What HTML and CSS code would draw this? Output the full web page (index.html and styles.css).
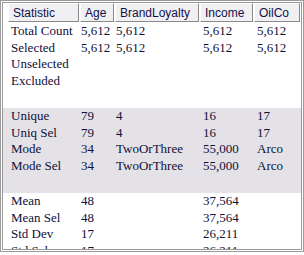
FILE: index.html
```html
<!DOCTYPE html>
<html>
<head>
<meta charset="utf-8">
<link rel="stylesheet" href="styles.css">
</head>
<body>
<div class="frame">
  <div class="head">
    <div class="th">Statistic</div>
    <div class="th">Age</div>
    <div class="th">BrandLoyalty</div>
    <div class="th">Income</div>
    <div class="th">OilCo</div>
  </div>
  <div class="group">
    <div class="row"><span class="c1">Total Count</span><span class="c2">5,612</span><span class="c3">5,612</span><span class="c4">5,612</span><span class="c5">5,612</span></div>
    <div class="row"><span class="c1">Selected</span><span class="c2">5,612</span><span class="c3">5,612</span><span class="c4">5,612</span><span class="c5">5,612</span></div>
    <div class="row"><span class="c1">Unselected</span><span class="c2"></span><span class="c3"></span><span class="c4"></span><span class="c5"></span></div>
    <div class="row"><span class="c1">Excluded</span><span class="c2"></span><span class="c3"></span><span class="c4"></span><span class="c5"></span></div>
  </div>
  <div class="group shade">
    <div class="row"><span class="c1">Unique</span><span class="c2">79</span><span class="c3">4</span><span class="c4">16</span><span class="c5">17</span></div>
    <div class="row"><span class="c1">Uniq Sel</span><span class="c2">79</span><span class="c3">4</span><span class="c4">16</span><span class="c5">17</span></div>
    <div class="row"><span class="c1">Mode</span><span class="c2">34</span><span class="c3">TwoOrThree</span><span class="c4">55,000</span><span class="c5">Arco</span></div>
    <div class="row"><span class="c1">Mode Sel</span><span class="c2">34</span><span class="c3">TwoOrThree</span><span class="c4">55,000</span><span class="c5">Arco</span></div>
  </div>
  <div class="group">
    <div class="row"><span class="c1">Mean</span><span class="c2">48</span><span class="c3"></span><span class="c4">37,564</span><span class="c5"></span></div>
    <div class="row"><span class="c1">Mean Sel</span><span class="c2">48</span><span class="c3"></span><span class="c4">37,564</span><span class="c5"></span></div>
    <div class="row"><span class="c1">Std Dev</span><span class="c2">17</span><span class="c3"></span><span class="c4">26,211</span><span class="c5"></span></div>
    <div class="row"><span class="c1">Std Sel</span><span class="c2">17</span><span class="c3"></span><span class="c4">26,211</span><span class="c5"></span></div>
  </div>
</div>
</body>
</html>
```

FILE: styles.css
```css
html, body {
  margin: 0;
  padding: 0;
  background: #ffffff;
}

.frame {
  box-sizing: border-box;
  width: 304px;
  height: 252px;
  border: 3px double #9a9a9a;
  overflow: hidden;
  background: #ffffff;
  color: #10103a;
}

.head {
  display: grid;
  grid-template-columns: 5px 72px 35px 85px 54px 47px;
  height: 20px;
}

.head::before {
  content: "";
}

.th {
  box-sizing: border-box;
  margin-right: 1px;
  height: 19px;
  padding: 2px 0 0 4px;
  background: #f0eff2;
  border: 1px solid;
  border-color: #ffffff #8a8a8a #8a8a8a #ffffff;
  font-family: "Liberation Sans", Arial, sans-serif;
  font-size: 12px;
  line-height: 14px;
  color: #12124a;
  white-space: nowrap;
  overflow: hidden;
}

.group {
  height: 85px;
}

.shade {
  background: #e4e2e6;
}

.row {
  display: grid;
  grid-template-columns: 5px 72px 35px 85px 54px 47px;
  height: 16.5px;
  font-family: "Liberation Serif", "Times New Roman", serif;
  font-size: 13px;
  line-height: 16.5px;
  white-space: nowrap;
}

.row::before {
  content: "";
}

.c1 { padding-left: 3px; }
.c2 { padding-left: 1px; }
.c3 { padding-left: 1px; }
.c4 { padding-left: 3px; }
.c5 { padding-left: 3px; }
```
